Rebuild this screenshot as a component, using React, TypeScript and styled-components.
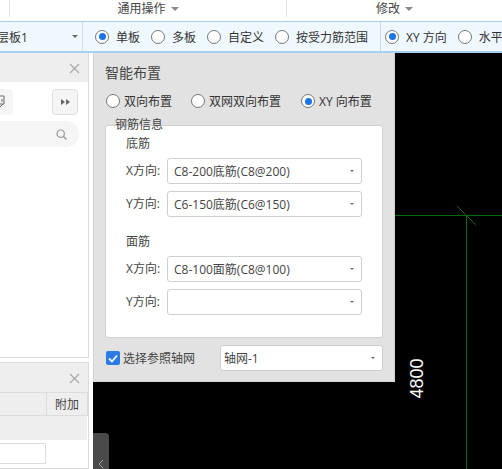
import React from "react";
import styled, { createGlobalStyle } from "styled-components";

const Global = createGlobalStyle`
  html, body { margin: 0; padding: 0; background: #fff; }
  * { box-sizing: border-box; }
  body { font-family: "Open Sans", "Noto Sans CJK SC", "Liberation Sans", sans-serif; font-size: 12px; color: #333; }
`;

const Page = styled.div`
  width: 502px; height: 469px; overflow: hidden; display: flex; flex-direction: column;
`;
const TopBar = styled.div`
  height: 21px; display: flex; background: #fff; flex: none;
`;
const GroupLabel = styled.div<{ $w: number; $divider?: boolean }>`
  width: ${p => p.$w}px; display: flex; align-items: center; justify-content: center; gap: 5px;
  height: 17px; white-space: nowrap; line-height: 16px; color: #444;
  border-right: ${p => (p.$divider ? "1px solid #e2e2e2" : "none")};
`;
const Caret = styled.span<{ $c?: string; $s?: number }>`
  display: inline-block; width: 0; height: 0; flex: none;
  border-left: ${p => p.$s ?? 4}px solid transparent;
  border-right: ${p => p.$s ?? 4}px solid transparent;
  border-top: ${p => p.$s ?? 4}px solid ${p => p.$c ?? "#888"};
`;
const Toolbar = styled.div`
  height: 32px; flex: none; display: flex; align-items: center; background: #f0f8ff;
  border-top: 1px solid #a5cdee; border-bottom: 2px solid #a9d0f0;
`;
const LevelPick = styled.div`
  width: 86px; height: 100%; display: flex; align-items: center; justify-content: space-between;
  padding-right: 4px; border-right: 1px solid #d3dde5; margin-left: -3px; flex: none;
`;
const ToolGroup = styled.div<{ $w?: number; $pad: number; $divider?: boolean }>`
  display: flex; align-items: center; gap: 11px; height: 29px; padding-left: ${p => p.$pad}px; flex: none;
  ${p => (p.$w ? `width:${p.$w}px;` : "")}
  ${p => (p.$divider ? "border-right:1px solid #d3d8dc;" : "")}
`;
const RadioItem = styled.label`
  display: flex; align-items: center; gap: 7px; white-space: nowrap; color: #333;
`;
const RadioDot = styled.span<{ $on?: boolean }>`
  width: 14px; height: 14px; border-radius: 50%; background: #fff; border: 1px solid #777; flex: none;
  display: flex; align-items: center; justify-content: center;
  &::after { content: ""; width: 7px; height: 7px; border-radius: 50%; background: ${p => (p.$on ? "#1a73e8" : "transparent")}; }
`;
const Main = styled.div`
  flex: 1; display: flex; min-height: 0;
`;
const Sidebar = styled.div`
  width: 93px; flex: none; display: flex; flex-direction: column; gap: 4px; background: #fff; padding-right: 4px;
`;
const Panel = styled.div<{ $h?: number }>`
  background: #fff; border-right: 1px solid #dcdcdc; border-bottom: 1px solid #dcdcdc;
  display: flex; flex-direction: column;
  ${p => (p.$h ? `height:${p.$h}px;flex:none;` : "flex:1;min-height:0;")}
`;
const PanelHead = styled.div<{ $h: number; $top?: boolean }>`
  height: ${p => p.$h}px; flex: none; background: #eeeeef; display: flex; align-items: center; justify-content: flex-end;
  padding-right: 8px; ${p => (p.$top ? "border-top:1px solid #dcdcdc;" : "")}
`;
const ToolRow = styled.div`
  display: flex; justify-content: space-between; padding: 7px 10px 0 0; height: 33px; flex: none;
`;
const IconTile = styled.div`
  width: 13px; height: 26px; background: #f5f5f5; border-radius: 0 4px 4px 0; display: flex; align-items: center;
`;
const StepButton = styled.div`
  width: 26px; height: 26px; background: #f5f5f6; border: 1px solid #dedede; border-radius: 4px;
  display: flex; align-items: center; justify-content: center;
`;
const SearchBox = styled.div`
  margin: 6px 9px 0 0; height: 26px; background: #f5f5f5; border-radius: 0 13px 13px 0;
  display: flex; align-items: center; justify-content: flex-end; padding-right: 12px;
`;
const TableHead = styled.div`
  height: 24px; flex: none; background: #eeeeef; display: flex; justify-content: flex-end;
  border-top: 1px solid #dcdcdc; border-bottom: 1px solid #dcdcdc;
`;
const HeadCell = styled.div`
  width: 42px; border-left: 1px solid #dcdcdc; border-right: 1px solid #dcdcdc; display: flex; align-items: center; justify-content: center; color: #444;
`;
const TableRow = styled.div`
  height: 24px; flex: none; background: #eeeeee; margin-right: 1px;
`;
const CellInput = styled.div`
  width: 46px; height: 21px; margin-top: 3px; background: #fff; border: 1px solid #dcdcdc; border-left: none; flex: none;
`;
const Canvas = styled.div`
  flex: 1; background: #000; position: relative; overflow: hidden;
`;
const Drawing = styled.svg`
  position: absolute; left: 0; top: 0;
`;
const Dialog = styled.div`
  position: absolute; left: 0; top: 0; width: 302px; height: 329px; background: #e2e2e2;
  padding: 10px 11px 0 11px; display: flex; flex-direction: column; border-right: 1px solid #d2d2d2;
  border-bottom: 1px solid #d2d2d2; border-left: 1px solid #d2d2d2; box-shadow: 0 -2px 4px rgba(0,0,0,.06);
`;
const DialogTitle = styled.div`
  font-size: 14px; line-height: 19px; color: #444; height: 19px; flex: none;
`;
const ModeRow = styled.div`
  display: flex; margin: 9px 0 0 1px; height: 20px; flex: none; align-items: center;
`;
const ModeItem = styled.label<{ $w: number }>`
  display: flex; align-items: center; gap: 4px; width: ${p => p.$w}px; white-space: nowrap; color: #333; flex: none;
`;
const Fieldset = styled.div`
  position: relative; margin-top: 14px; height: 213px; width: 278px; flex: none; background: #fff;
  border: 1px solid #d0d0d0; border-radius: 3px; padding: 9px 20px 0 20px;
`;
const Legend = styled.span`
  position: absolute; left: 9px; top: -9px; line-height: 16px; color: #444; white-space: nowrap;
`;
const SectionLabel = styled.div<{ $top?: number }>`
  height: 18px; line-height: 18px; margin-top: ${p => p.$top ?? 0}px; color: #444;
`;
const FieldRow = styled.div<{ $top: number }>`
  display: flex; align-items: center; margin-top: ${p => p.$top}px; height: 26px;
`;
const FieldLabel = styled.span`
  width: 41px; flex: none; color: #444; white-space: nowrap; margin-top: -3px;
`;
const Select = styled.div<{ $w: number; $pad: number }>`
  width: ${p => p.$w}px; height: 26px; background: #fff; border: 1px solid #cfcfcf; border-radius: 3px; flex: none;
  display: flex; align-items: center; justify-content: space-between; padding: 0 7px 0 ${p => p.$pad}px; color: #444; white-space: nowrap;
`;
const FooterRow = styled.div`
  display: flex; align-items: center; margin-top: 8px; height: 24px; flex: none;
`;
const CheckLabel = styled.label`
  display: flex; align-items: center; gap: 3px; width: 115px; padding-left: 1px; color: #444; white-space: nowrap; flex: none;
`;
const CheckBox = styled.span`
  width: 14px; height: 14px; border-radius: 2px; background: #2a7be4; display: flex; align-items: center; justify-content: center; flex: none;
`;
const CollapseTab = styled.div`
  position: absolute; left: 0; bottom: 0; width: 16px; height: 36px; background: #4a4a4a; border-radius: 0 4px 0 0;
  display: flex; align-items: flex-end; justify-content: center;
`;

const Close = () => (
  <svg width="12" height="12" viewBox="0 0 12 12"><path d="M2 2l9 9M11 2l-9 9" stroke="#a8a8a8" strokeWidth="1.2" fill="none" /></svg>
);
const Radio = ({ on, children }: { on?: boolean; children: React.ReactNode }) => (
  <RadioItem><RadioDot $on={on} />{children}</RadioItem>
);
const Mode = ({ on, w, children }: { on?: boolean; w: number; children: React.ReactNode }) => (
  <ModeItem $w={w}><RadioDot $on={on} />{children}</ModeItem>
);
const Drop = ({ w, pad = 6, children }: { w: number; pad?: number; children?: React.ReactNode }) => (
  <Select $w={w} $pad={pad}><span>{children}</span><Caret $c="#666" $s={2.5} /></Select>
);

export default function App() {
  return (
    <Page>
      <Global />
      <TopBar>
        <GroupLabel $w={10} $divider />
        <GroupLabel $w={277} $divider>通用操作 <Caret /></GroupLabel>
        <GroupLabel $w={215}>修改 <Caret /></GroupLabel>
      </TopBar>
      <Toolbar>
        <LevelPick><span>层板1</span><Caret $c="#666" $s={3} /></LevelPick>
        <ToolGroup $pad={12} $w={298} $divider>
          <Radio on>单板</Radio>
          <Radio>多板</Radio>
          <Radio>自定义</Radio>
          <Radio>按受力筋范围</Radio>
        </ToolGroup>
        <ToolGroup $pad={4}>
          <Radio on>XY 方向</Radio>
          <Radio>水平</Radio>
        </ToolGroup>
      </Toolbar>
      <Main>
        <Sidebar>
          <Panel>
            <PanelHead $h={29}><Close /></PanelHead>
            <ToolRow>
              <IconTile>
                <svg width="5" height="14" viewBox="0 0 5 14"><path d="M0 1h4v8H0M2 4v3M0 12l3-3" stroke="#666" strokeWidth="1" fill="none" /></svg>
              </IconTile>
              <StepButton>
                <svg width="9" height="6" viewBox="0 0 9 6"><path d="M0 0l4 3-4 3zM5 0l4 3-4 3z" fill="#666" /></svg>
              </StepButton>
            </ToolRow>
            <SearchBox>
              <svg width="11" height="11" viewBox="0 0 11 11"><circle cx="4.7" cy="4.7" r="3.7" stroke="#999" strokeWidth="1.2" fill="none" /><path d="M7.5 7.5l3 3" stroke="#999" strokeWidth="1.4" /></svg>
            </SearchBox>
          </Panel>
          <Panel $h={107}>
            <PanelHead $h={30} $top><Close /></PanelHead>
            <TableHead><HeadCell>附加</HeadCell></TableHead>
            <TableRow />
            <CellInput />
          </Panel>
        </Sidebar>
        <Canvas>
          <Drawing width="409" height="416" viewBox="0 0 409 416">
            <path d="M302 162.5H409M373.5 162.5V416" stroke="#0a6a0a" strokeWidth="1" fill="none" shapeRendering="crispEdges" />
            <path d="M364 153L383 172" stroke="#0a6a0a" strokeWidth="1" fill="none" />
            <text x="0" y="0" transform="translate(330 345.5) rotate(-90)" fill="#fff" fontFamily="Liberation Sans" fontSize="18">4800</text>
          </Drawing>
          <CollapseTab>
            <svg width="8" height="10" viewBox="0 0 8 10"><path d="M6 1L2 5l4 4" stroke="#aaa" strokeWidth="1" fill="none" /></svg>
          </CollapseTab>
          <Dialog>
            <DialogTitle>智能布置</DialogTitle>
            <ModeRow>
              <Mode w={85}>双向布置</Mode>
              <Mode w={110}>双网双向布置</Mode>
              <Mode on w={80}>XY 向布置</Mode>
            </ModeRow>
            <Fieldset>
              <Legend>钢筋信息</Legend>
              <SectionLabel>底筋</SectionLabel>
              <FieldRow $top={5}><FieldLabel>X方向:</FieldLabel><Drop w={195}>C8-200底筋(C8@200)</Drop></FieldRow>
              <FieldRow $top={7}><FieldLabel>Y方向:</FieldLabel><Drop w={195}>C6-150底筋(C6@150)</Drop></FieldRow>
              <SectionLabel $top={16}>面筋</SectionLabel>
              <FieldRow $top={5}><FieldLabel>X方向:</FieldLabel><Drop w={195}>C8-100面筋(C8@100)</Drop></FieldRow>
              <FieldRow $top={7}><FieldLabel>Y方向:</FieldLabel><Drop w={195} /></FieldRow>
            </Fieldset>
            <FooterRow>
              <CheckLabel>
                <CheckBox>
                  <svg width="10" height="9" viewBox="0 0 10 9"><path d="M1 4.5l3 3 5-6" stroke="#fff" strokeWidth="1.8" fill="none" /></svg>
                </CheckBox>
                选择参照轴网
              </CheckLabel>
              <Drop w={163} pad={3}>轴网-1</Drop>
            </FooterRow>
          </Dialog>
        </Canvas>
      </Main>
    </Page>
  );
}
